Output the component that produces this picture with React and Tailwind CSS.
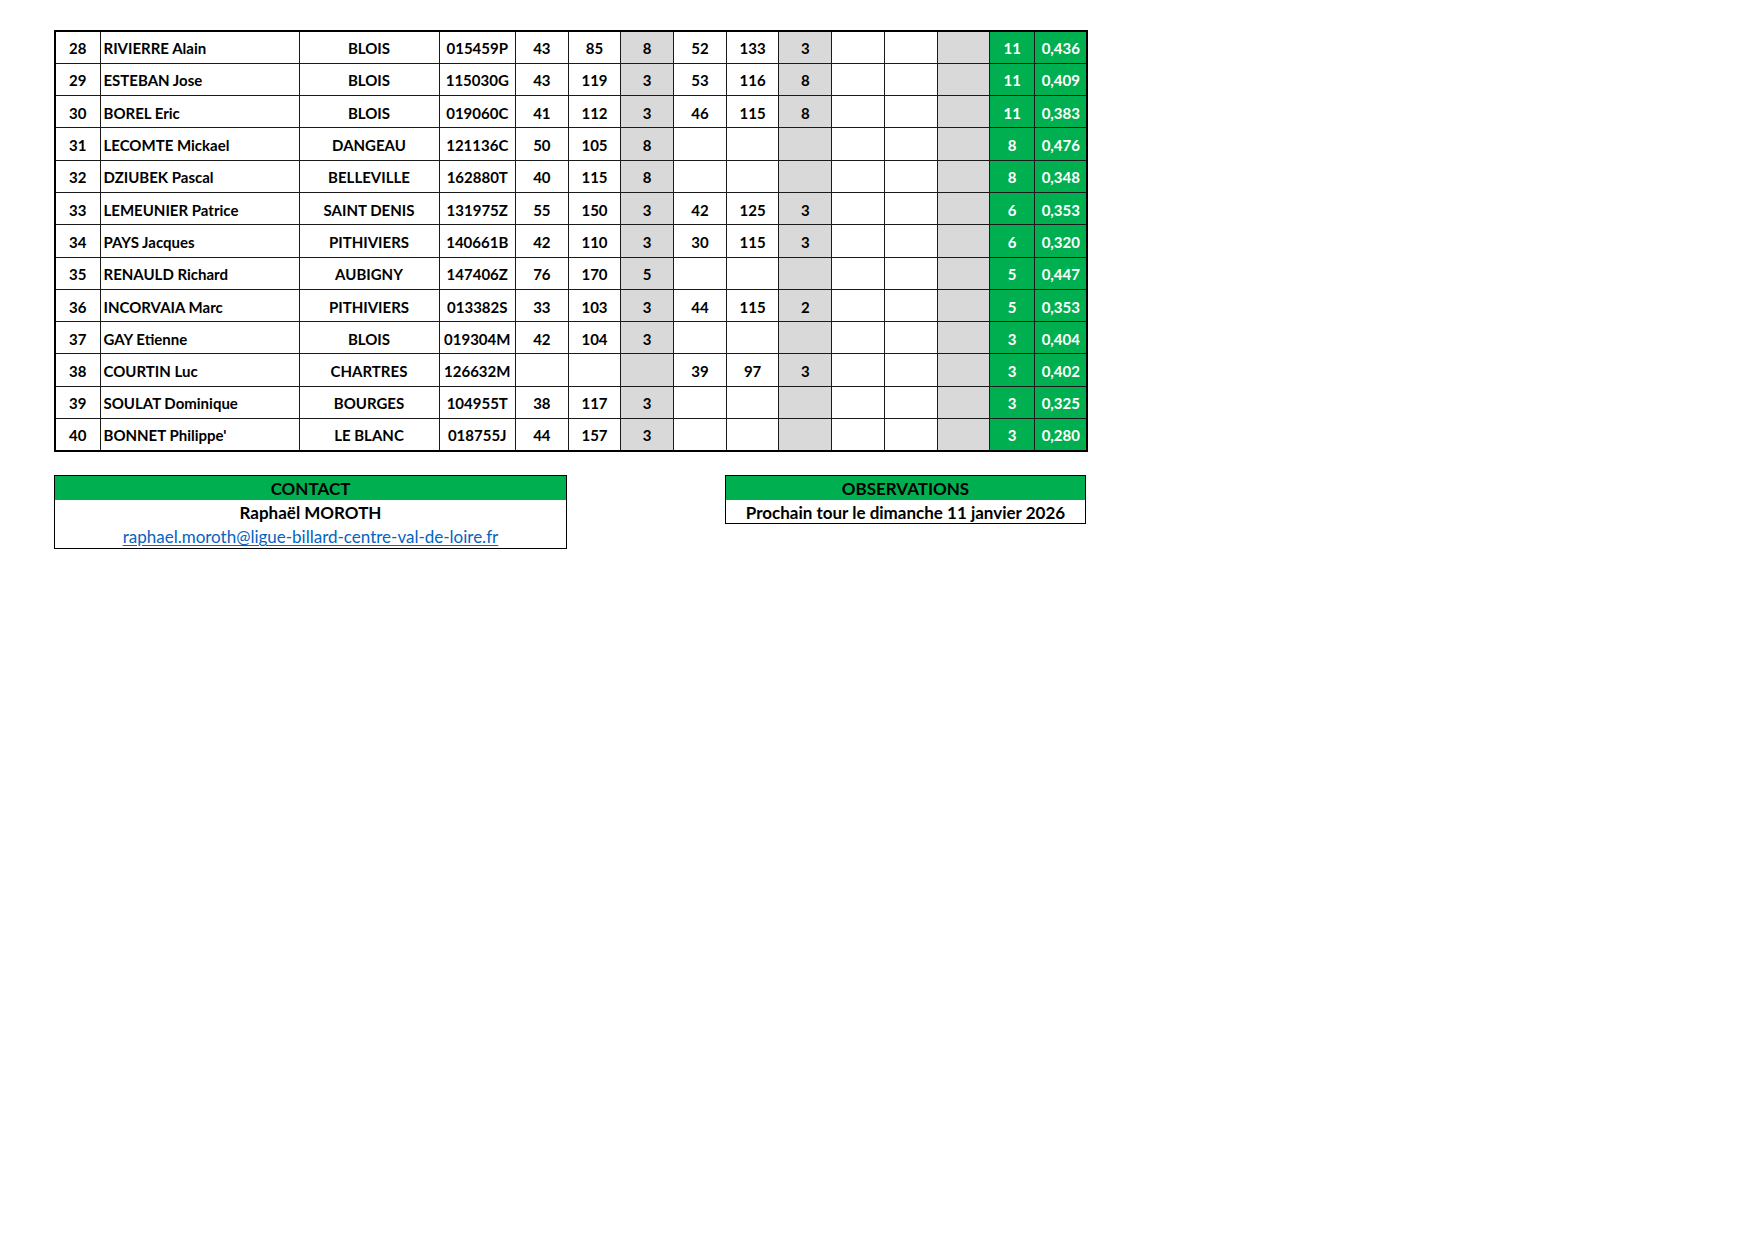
const widths = [45, 199, 140, 76.5, 52.7, 52.7, 52.7, 52.7, 52.7, 52.7, 52.7, 52.7, 52.7, 45, 52.7]

const rows = [
  ['28', 'RIVIERRE Alain', 'BLOIS', '015459P', '43', '85', '8', '52', '133', '3', '', '', '', '11', '0,436'],
  ['29', 'ESTEBAN Jose', 'BLOIS', '115030G', '43', '119', '3', '53', '116', '8', '', '', '', '11', '0,409'],
  ['30', 'BOREL Eric', 'BLOIS', '019060C', '41', '112', '3', '46', '115', '8', '', '', '', '11', '0,383'],
  ['31', 'LECOMTE Mickael', 'DANGEAU', '121136C', '50', '105', '8', '', '', '', '', '', '', '8', '0,476'],
  ['32', 'DZIUBEK Pascal', 'BELLEVILLE', '162880T', '40', '115', '8', '', '', '', '', '', '', '8', '0,348'],
  ['33', 'LEMEUNIER Patrice', 'SAINT DENIS', '131975Z', '55', '150', '3', '42', '125', '3', '', '', '', '6', '0,353'],
  ['34', 'PAYS Jacques', 'PITHIVIERS', '140661B', '42', '110', '3', '30', '115', '3', '', '', '', '6', '0,320'],
  ['35', 'RENAULD Richard', 'AUBIGNY', '147406Z', '76', '170', '5', '', '', '', '', '', '', '5', '0,447'],
  ['36', 'INCORVAIA Marc', 'PITHIVIERS', '013382S', '33', '103', '3', '44', '115', '2', '', '', '', '5', '0,353'],
  ['37', 'GAY Etienne', 'BLOIS', '019304M', '42', '104', '3', '', '', '', '', '', '', '3', '0,404'],
  ['38', 'COURTIN Luc', 'CHARTRES', '126632M', '', '', '', '39', '97', '3', '', '', '', '3', '0,402'],
  ['39', 'SOULAT Dominique', 'BOURGES', '104955T', '38', '117', '3', '', '', '', '', '', '', '3', '0,325'],
  ['40', "BONNET Philippe'", 'LE BLANC', '018755J', '44', '157', '3', '', '', '', '', '', '', '3', '0,280'],
]

const gray = [6, 9, 12]

function cellClass(i) {
  if (i === 13 || i === 14) return 'bg-[#00b050] text-white text-center'
  if (gray.includes(i)) return 'bg-[#d9d9d9] text-center'
  if (i === 1) return 'text-left pl-[3px]'
  return 'text-center'
}

export default function App() {
  return (
    <div className="min-h-screen bg-white pl-[54px] pt-[30px] font-['Lato','Liberation_Sans',sans-serif] text-[15px] font-bold text-black">
      <table className="w-[1032px] table-fixed border-collapse border-2 border-black">
        <colgroup>
          {widths.map((w, i) => (
            <col key={i} style={{ width: w }} />
          ))}
        </colgroup>
        <tbody>
          {rows.map((r) => (
            <tr key={r[0]} className="h-[32.3px]">
              {r.map((v, i) => (
                <td
                  key={i}
                  className={`border border-[#1a1a1a] p-0 pt-[3px] align-middle leading-none whitespace-nowrap ${cellClass(i)}`}
                >
                  {v}
                </td>
              ))}
            </tr>
          ))}
        </tbody>
      </table>

      <div className="mt-[23px] flex items-start gap-[158px] text-[17px] leading-none">
        <div className="w-[513px] border-[1.5px] border-black">
          <div className="flex h-[24px] items-center justify-center bg-[#00b050] pt-[2px]">CONTACT</div>
          <div className="flex h-[24px] items-center justify-center pt-[2px]">Raphaël MOROTH</div>
          <div className="flex h-[24px] items-center justify-center pt-[2px]">
            <a href="#" className="font-normal text-[#0563c1] underline underline-offset-2">
              raphael.moroth@ligue-billard-centre-val-de-loire.fr
            </a>
          </div>
        </div>
        <div className="w-[361px] border-[1.5px] border-black">
          <div className="flex h-[24px] items-center justify-center bg-[#00b050] pt-[2px]">OBSERVATIONS</div>
          <div className="flex h-[23px] items-center justify-center pt-[2px]">
            Prochain tour le dimanche 11 janvier 2026
          </div>
        </div>
      </div>
    </div>
  )
}
